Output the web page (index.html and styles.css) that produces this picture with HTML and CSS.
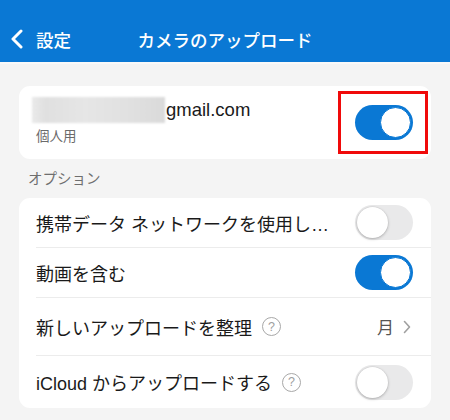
FILE: index.html
```html
<!DOCTYPE html>
<html lang="ja">
<head>
<meta charset="utf-8">
<link rel="stylesheet" href="styles.css">
</head>
<body>
<header class="nav">
  <div class="nav-left">
    <svg class="back" width="14" height="20" viewBox="0 0 14 20"><path d="M11 2 L3 10 L11 18" fill="none" stroke="#fff" stroke-width="3" stroke-linecap="round" stroke-linejoin="round"/></svg>
    <span class="back-label">設定</span>
  </div>
  <div class="nav-title">カメラのアップロード</div>
  <div></div>
</header>
<main class="content">
  <section class="card account">
    <div class="account-info">
      <div class="email"><span class="blur"></span><span class="domain">gmail.com</span></div>
      <div class="sub">個人用</div>
    </div>
    <div class="highlight"><span class="toggle on"><span class="knob"></span></span></div>
  </section>
  <div class="section-label">オプション</div>
  <section class="card">
    <div class="row"><span class="label">携帯データ ネットワークを使用し…</span><span class="toggle"><span class="knob"></span></span></div>
    <div class="row"><span class="label">動画を含む</span><span class="toggle on"><span class="knob"></span></span></div>
    <div class="row row-tall"><span class="label">新しいアップロードを整理<span class="help">?</span></span><span class="value">月<svg class="chev" width="8" height="14" viewBox="0 0 8 14"><path d="M1.5 1.5 L6.5 7 L1.5 12.5" fill="none" stroke="#a0a0a0" stroke-width="1.6" stroke-linecap="round" stroke-linejoin="round"/></svg></span></div>
    <div class="row"><span class="label">iCloud からアップロードする<span class="help">?</span></span><span class="toggle"><span class="knob"></span></span></div>
  </section>
</main>
</body>
</html>
```

FILE: styles.css
```css
* { box-sizing: border-box; }
html, body { margin: 0; padding: 0; }
body {
  width: 450px;
  height: 420px;
  overflow: hidden;
  background: #f4f4f4;
  font-family: "Liberation Sans", "Noto Sans CJK JP", sans-serif;
  color: #1a1a1a;
}
.nav {
  height: 64px;
  background: #0a78d4;
  color: #fff;
  display: grid;
  grid-template-columns: 1fr auto 1fr;
  align-items: center;
  padding-top: 16px;
  border-bottom: 2px solid #f9f9f9;
}
.nav-left {
  display: flex;
  align-items: center;
  padding-left: 10px;
  gap: 12px;
}
.back-label, .nav-title {
  font-family: "Noto Sans CJK JP", sans-serif;
  font-size: 17.5px;
  font-weight: 500;
}
.content { padding: 22px 19px 0; }
.card {
  background: #fff;
  border-radius: 11px;
}
.account {
  height: 73px;
  display: flex;
  justify-content: space-between;
  align-items: center;
  padding: 0 3px 0 13px;
}
.account-info { display: flex; flex-direction: column; }
.email {
  display: flex;
  align-items: center;
  height: 26px;
  margin-top: -4px;
}
.blur {
  width: 133px;
  height: 26px;
  background: linear-gradient(90deg, #eaeaea 0%, #e0e0e0 10%, #e6e6e6 40%, #e0e0e0 75%, #dadada 100%);
  filter: blur(1px);
}
.domain {
  font-size: 18.5px;
  color: #1a1a1a;
  margin-left: 1px;
}
.sub {
  font-family: "Noto Sans CJK JP", sans-serif;
  font-size: 13.5px;
  color: #6b6b6b;
  margin-top: 3px;
  padding-left: 4px;
  line-height: 18px;
}
.highlight {
  width: 90px;
  height: 63px;
  border: 3px solid #f00a0a;
  display: flex;
  align-items: center;
  padding-left: 14px;
}
.section-label {
  font-family: "Noto Sans CJK JP", sans-serif;
  font-size: 14.5px;
  color: #6e6e6e;
  padding: 9px 0 0 9px;
  height: 39px;
  line-height: 20px;
}
.row {
  height: 50px;
  display: flex;
  align-items: center;
  justify-content: space-between;
  margin-left: 17px;
  padding-right: 18px;
  border-bottom: 1px solid #ececec;
}
.row:last-child { border-bottom: none; height: 52px; }
.row-tall { height: 58px; }
.label {
  font-family: "Liberation Sans", "Noto Sans CJK JP", sans-serif;
  font-size: 18px;
  color: #1a1a1a;
  display: flex;
  align-items: center;
  white-space: nowrap;
}
.help {
  display: inline-flex;
  align-items: center;
  justify-content: center;
  width: 19px;
  height: 19px;
  margin-left: 10px;
  border: 1.3px solid #a8a8a8;
  border-radius: 50%;
  font-size: 12.5px;
  color: #a0a0a0;
  font-family: "Liberation Sans", sans-serif;
}
.value {
  display: flex;
  align-items: center;
  gap: 9px;
  font-family: "Noto Sans CJK JP", sans-serif;
  font-size: 17px;
  color: #555;
  padding-right: 2px;
}
.toggle {
  width: 58px;
  height: 35px;
  border-radius: 18px;
  background: #e9e9ea;
  display: flex;
  align-items: center;
  padding: 2px;
  flex-shrink: 0;
}
.knob {
  width: 31px;
  height: 31px;
  border-radius: 50%;
  background: #fff;
  box-shadow: 0 1px 3px rgba(0,0,0,0.25), 0 0 0 0.5px rgba(0,0,0,0.06);
}
.toggle.on {
  background: #0a78d4;
  justify-content: flex-end;
}
.toggle.on .knob {
  box-shadow: none;
  border: 1.5px solid #0a78d4;
}
```
